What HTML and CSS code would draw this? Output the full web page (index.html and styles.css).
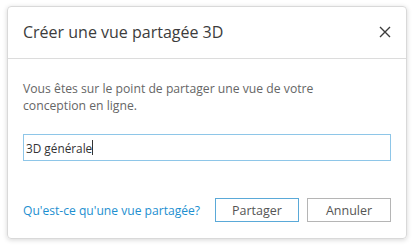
FILE: index.html
```html
<!DOCTYPE html>
<html lang="fr">
<head>
<meta charset="utf-8">
<link rel="stylesheet" href="styles.css">
</head>
<body>
<div class="dialog">
  <div class="header">
    <div class="title">Créer une vue partagée 3D</div>
    <svg class="close" width="12" height="12" viewBox="0 0 12 12"><path d="M1 1L11 11M11 1L1 11" stroke="#3c3c3c" stroke-width="1.4" fill="none"/></svg>
  </div>
  <div class="body">
    <p class="desc">Vous êtes sur le point de partager une vue de votre conception en ligne.</p>
    <div class="input"><span>3D générale</span><span class="caret"></span></div>
  </div>
  <div class="footer">
    <a class="link">Qu'est-ce qu'une vue partagée?</a>
    <div class="buttons">
      <div class="btn primary">Partager</div>
      <div class="btn">Annuler</div>
    </div>
  </div>
</div>
</body>
</html>
```
FILE: styles.css
```css
html, body { margin: 0; background: #fff; }
body { padding: 6px 7px; font-family: "Open Sans", "Noto Sans", sans-serif; }
.dialog {
  width: 400px; height: 233px; box-sizing: border-box;
  border: 1px solid #d9d9d9; border-radius: 4px;
  box-shadow: 0 1px 5px rgba(0,0,0,0.16);
  display: flex; flex-direction: column;
}
.header {
  height: 52px; box-sizing: border-box; border-bottom: 1px solid #dcdcdc;
  display: flex; align-items: center; justify-content: space-between;
  padding: 0 15px 0 15px;
}
.title { font-size: 16px; color: #3c3c3c; margin-top: -1px; }
.close { display: block; margin-top: -1px; }
.body { padding: 21px 15px 0 15px; }
.desc { margin: 0; max-width: 320px; font-size: 12.2px; line-height: 17px; color: #666; }
.input {
  margin-top: 20px; height: 27px; box-sizing: border-box;
  border: 1px solid #8ec6e8; display: flex; align-items: center;
  padding-left: 2px; font-size: 11.8px; color: #333;
}
.caret { width: 1px; height: 15px; background: #333; }
.footer {
  margin-top: auto; padding: 0 15px 16px 15px;
  display: flex; align-items: center; justify-content: space-between;
}
.link { font-size: 12.1px; color: #1d8fd0; }
.buttons { display: flex; gap: 8px; }
.btn {
  width: 84px; height: 24px; box-sizing: border-box; border: 1px solid #b5b5b5;
  display: flex; align-items: center; justify-content: center;
  font-size: 12.5px; color: #555;
}
.btn.primary { border-color: #5aa9d8; }
```
